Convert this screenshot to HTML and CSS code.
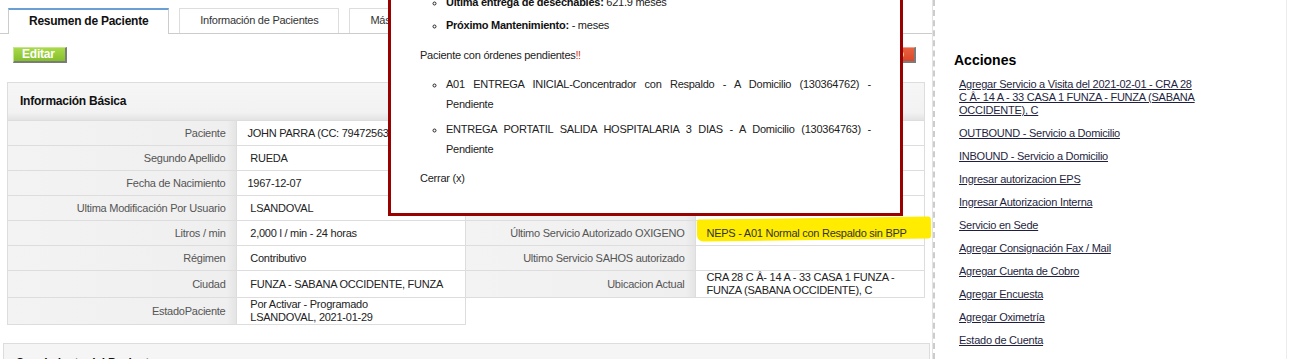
FILE: index.html
```html
<!DOCTYPE html>
<html lang="es">
<head>
    <meta charset="UTF-8">
    <title>Resumen de Paciente</title>
    <link rel="stylesheet" href="styles.css">
</head>
<body>

<div class="page">
    <div class="main">
        <ul class="tabs">
            <li class="tab active">Resumen de Paciente</li>
            <li class="tab">Información de Pacientes</li>
            <li class="tab">Más Información</li>
        </ul>

        <div class="toolbar">
            <button class="btn btn-green">Editar</button>
            <button class="btn btn-red">Inactivo</button>
        </div>

        <div class="panel">
            <div class="panel-head">Información Básica</div>
            <div class="info">
                <div class="cell lbl first">Paciente</div>
                <div class="cell val">JOHN PARRA (CC: 79472563)</div>
                <div class="cell lbl">Dirección</div>
                <div class="cell val">CRA 28 C Â- 14 A - 33</div>

                <div class="cell lbl first">Segundo Apellido</div>
                <div class="cell val">&nbsp;RUEDA</div>
                <div class="cell lbl">Teléfono</div>
                <div class="cell val">&nbsp;</div>

                <div class="cell lbl first">Fecha de Nacimiento</div>
                <div class="cell val">1967-12-07</div>
                <div class="cell lbl">EPS</div>
                <div class="cell val">NUEVA EPS</div>

                <div class="cell lbl first">Ultima Modificación Por Usuario</div>
                <div class="cell val">&nbsp;LSANDOVAL</div>
                <div class="cell lbl">Médico Tratante</div>
                <div class="cell val">&nbsp;</div>

                <div class="cell lbl first">Litros / min</div>
                <div class="cell val">&nbsp;2,000 l / min - 24 horas</div>
                <div class="cell lbl">Último Servicio Autorizado OXIGENO</div>
                <div class="cell val hl"><span>NEPS - A01 Normal con Respaldo sin BPP</span></div>

                <div class="cell lbl first">Régimen</div>
                <div class="cell val">&nbsp;Contributivo</div>
                <div class="cell lbl">Ultimo Servicio SAHOS autorizado</div>
                <div class="cell val"></div>

                <div class="cell lbl first">Ciudad</div>
                <div class="cell val">&nbsp;FUNZA - SABANA OCCIDENTE, FUNZA</div>
                <div class="cell lbl">Ubicacion Actual</div>
                <div class="cell val">CRA 28 C Â- 14 A - 33 CASA 1 FUNZA - FUNZA (SABANA OCCIDENTE), C</div>

                <div class="cell lbl first">EstadoPaciente</div>
                <div class="cell val">&nbsp;Por Activar - Programado<br>&nbsp;LSANDOVAL, 2021-01-29</div>
            </div>
        </div>

        <div class="panel-next">
            <div class="panel-head">Seguimiento del Paciente</div>
        </div>
    </div>

    <div class="side">
        <h3>Acciones</h3>
        <ul class="actions">
            <li><a href="#">Agregar Servicio a Visita del 2021-02-01 - CRA 28 C Â- 14 A - 33 CASA 1 FUNZA - FUNZA (SABANA OCCIDENTE), C</a></li>
            <li><a href="#">OUTBOUND - Servicio a Domicilio</a></li>
            <li><a href="#">INBOUND - Servicio a Domicilio</a></li>
            <li><a href="#">Ingresar autorizacion EPS</a></li>
            <li><a href="#">Ingresar Autorizacion Interna</a></li>
            <li><a href="#">Servicio en Sede</a></li>
            <li><a href="#">Agregar Consignación Fax / Mail</a></li>
            <li><a href="#">Agregar Cuenta de Cobro</a></li>
            <li><a href="#">Agregar Encuesta</a></li>
            <li><a href="#">Agregar Oximetría</a></li>
            <li><a href="#">Estado de Cuenta</a></li>
        </ul>
    </div>

    <div class="popup">
        <ul class="stats">
            <li><b>Ultima entrega de desechables:</b> 621.9 meses</li>
            <li><b>Próximo Mantenimiento:</b> - meses</li>
        </ul>
        <p class="warn">Paciente con órdenes pendientes<span class="bang">&#8252;</span></p>
        <ul class="orders">
            <li>A01 ENTREGA INICIAL-Concentrador con Respaldo - A Domicilio (130364762) - Pendiente</li>
            <li>ENTREGA PORTATIL SALIDA HOSPITALARIA 3 DIAS - A Domicilio (130364763) - Pendiente</li>
        </ul>
        <p class="close">Cerrar (x)</p>
    </div>
</div>

</body>
</html>
```

FILE: styles.css
```css
body {
    margin: 0;
    font-family: "Liberation Sans", Arial, sans-serif;
    font-size: 11px;
    letter-spacing: -0.25px;
    color: #222;
    background-color: #fff;
}
.page {
    position: relative;
    display: flex;
    height: 359px;
    overflow: hidden;
}
.main {
    flex: none;
    width: 932px;
    border-right: 1px solid #e3e3e3;
}

/* tabs */
.tabs {
    display: flex;
    gap: 10px;
    height: 25px;
    margin: 0;
    padding: 8px 0 0 8px;
    list-style: none;
    border-bottom: 1px solid #ccc;
}
.tab {
    height: 25px;
    padding: 0 20px;
    box-sizing: border-box;
    border: 1px solid #ddd;
    border-bottom: none;
    background-color: #fff;
    color: #333;
    line-height: 22px;
}
.active {
    height: 26px;
    border-color: #ccc;
    border-top: 2px solid #6a9fd6;
    font-size: 12px;
    font-weight: bold;
    color: #111;
}

/* buttons */
.toolbar {
    display: flex;
    justify-content: space-between;
    padding: 13px 16px 0 13px;
}
.btn {
    height: 16px;
    padding: 0 10px 0 8px;
    border: 1px solid;
    border-right-width: 2px;
    border-bottom-width: 2px;
    font-family: "Liberation Sans", Arial, sans-serif;
    font-size: 12px;
    font-weight: bold;
    letter-spacing: -0.2px;
    line-height: 13px;
    color: #fff;
}
.btn-green {
    background: linear-gradient(#a9d94c, #84c02a);
    border-color: #c6e68c #7b7b7b #7b7b7b #c6e68c;
}
.btn-red {
    background: linear-gradient(#ea6240, #d9472a);
    border-color: #f0a08c #7b7b7b #7b7b7b #f0a08c;
}

/* panels */
.panel {
    margin: 19px 7px 0 7px;
}
.panel-head {
    height: 37px;
    padding-left: 12px;
    border: 1px solid #ddd;
    border-bottom: none;
    background: linear-gradient(#f6f6f6, #f2f2f2 80%, #e3e3e3);
    font-size: 12px;
    font-weight: bold;
    line-height: 37px;
    color: #111;
}
.panel-next {
    margin: 18px 2px 0 3px;
}
.panel-next .panel-head {
    background: #f5f5f5;
    border-bottom: 1px solid #ddd;
    line-height: 38px;
}

.info {
    display: grid;
    grid-template-columns: repeat(4, 1fr);
    border-top: 1px solid #ddd;
}
.cell {
    display: flex;
    align-items: center;
    min-width: 0;
    min-height: 24px;
    border-right: 1px solid #ddd;
    border-bottom: 1px solid #ddd;
    line-height: 13px;
}
.first {
    border-left: 1px solid #ddd;
}
.lbl {
    justify-content: flex-end;
    padding-right: 10px;
    text-align: right;
    color: #555;
    background: linear-gradient(to right, #f3f3f3, #efefef 96%, #e4e4e4);
}
.val {
    padding-left: 11px;
    padding-right: 6px;
    background-color: #fff;
}
.hl {
    position: relative;
}
.hl::before {
    content: "";
    position: absolute;
    left: 1px;
    right: -6px;
    top: -3px;
    bottom: 5px;
    background-color: #ffec00;
    border-radius: 2px 3px 3px 6px;
    transform: rotate(-0.8deg);
}
.hl span {
    position: relative;
    color: #333;
}

/* sidebar */
.side {
    flex: 1;
    margin-right: 4px;
    padding-left: 19px;
    border-left: 2px dashed #ccc;
    border-right: 1px solid #ececec;
}
.side h3 {
    margin: 52px 0 10px;
    font-size: 14px;
    letter-spacing: 0;
    line-height: 16px;
    color: #000;
}
.actions {
    width: 239px;
    margin: 0;
    padding-left: 5px;
    list-style: none;
}
.actions li {
    margin-bottom: 10px;
    line-height: 13px;
}
.actions a {
    color: #1f1f3f;
    text-decoration: underline;
}

/* popup over the summary */
.popup {
    position: absolute;
    left: 388px;
    top: -20px;
    width: 515px;
    box-sizing: border-box;
    padding: 10px 29px 26px 29px;
    border: 3px solid #990000;
    background-color: #fff;
    color: #222;
}
.popup ul {
    margin: 0;
    padding-left: 26px;
    list-style: circle;
}
.popup .stats {
    margin-bottom: 12px;
}
.stats li {
    margin-bottom: 5px;
    line-height: 18px;
}
.stats b {
    color: #111;
}
.warn {
    margin: 0 0 10px;
    line-height: 18px;
}
.bang {
    color: #d23c2a;
}
.orders li {
    margin-bottom: 5px;
    line-height: 20px;
    text-align: justify;
    word-spacing: 1.5px;
}
.close {
    margin: 10px 0 0;
    line-height: 18px;
}
```
